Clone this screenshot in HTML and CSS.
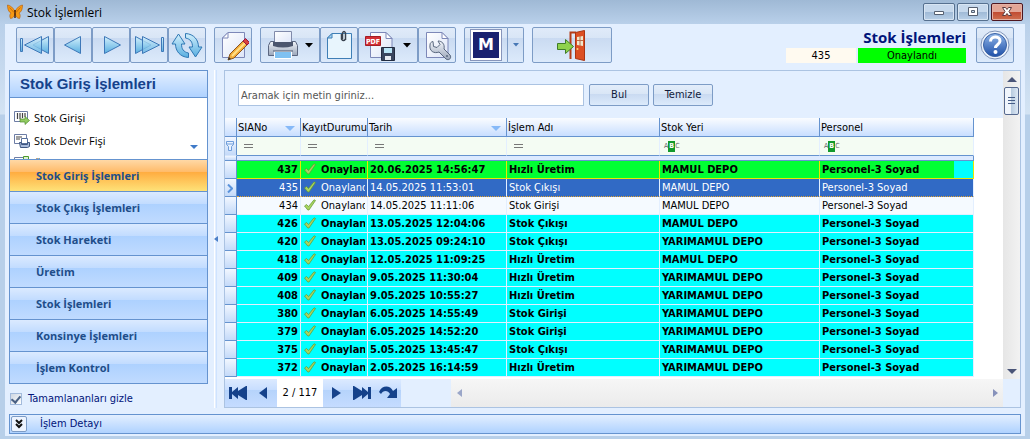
FILE: index.html
```html
<!DOCTYPE html>
<html lang="tr">
<head>
	<meta charset="utf-8">
	<title>Stok İşlemleri</title>
	<link rel="stylesheet" href="styles.css">
</head>
<body>
	<!-- shared icons -->
	<svg class="defs" width="0" height="0" aria-hidden="true">
		<defs>
			<linearGradient id="blue" x1="0" y1="0" x2="0" y2="1">
				<stop offset="0" stop-color="#d3f0fc"/>
				<stop offset="1" stop-color="#58aee0"/>
			</linearGradient>
			<linearGradient id="paper" x1="0" y1="0" x2="1" y2="1">
				<stop offset="0" stop-color="#ffffff"/>
				<stop offset="1" stop-color="#dde5f8"/>
			</linearGradient>
			<linearGradient id="metal" x1="0" y1="0" x2="0" y2="1">
				<stop offset="0" stop-color="#f2f5fa"/>
				<stop offset="1" stop-color="#9aa6ba"/>
			</linearGradient>
			<linearGradient id="orb" x1="0" y1="0" x2="0" y2="1">
				<stop offset="0" stop-color="#91b6e8"/>
				<stop offset="1" stop-color="#1d4fa8"/>
			</linearGradient>
			<symbol id="tick" viewBox="0 0 12 12">
				<path d="M.5 7l2-1.500 2 2L10 .8l1.500 .7L5 11H3.800z" fill="#a9d460" stroke="#5f9630" stroke-width=".7"/>
			</symbol>
			<symbol id="sheet" viewBox="0 0 32 32">
				<path d="M11 3.500h16.500v25h-22V9z" fill="url(#paper)" stroke="#7d88b8"/>
				<path d="M11 3.500V9H5.500z" fill="#fff" stroke="#7d88b8"/>
			</symbol>
			<symbol id="sheet-right" viewBox="0 0 32 32">
				<path d="M5.500 3.500H21l6 6v19H5.500z" fill="url(#paper)" stroke="#7d88b8"/>
				<path d="M21 3.500v6h6z" fill="#fff" stroke="#7d88b8"/>
			</symbol>
		</defs>
	</svg>

	<div class="window">
		<header class="titlebar">
			<svg class="app-icon" viewBox="0 0 16 16">
				<path d="M8 7.500C6 3.500 3.500 1.500 .5 1c0 3.500 .8 7 3.500 8-1.500 1.500-1.500 3.500-.5 5.500C6 14.500 7.500 12 8 9.500c.5 2.500 2 5 4.500 5 1-2 1-4-.5-5.500 2.700-1 3.500-4.500 3.500-8-3 .5-5.500 2.500-7.500 6.500z" fill="#f79a14" stroke="#b35a08" stroke-width=".6"/>
				<path d="M8 6v8" stroke="#3c1a04" stroke-width="1.400"/>
				<path d="M2.500 3.500L7 8.500M13.500 3.500L9 8.500" stroke="#b35a08" stroke-width=".7"/>
			</svg>
			<h1>Stok İşlemleri</h1>
			<div class="window-buttons">
				<button aria-label="Küçült"><svg viewBox="0 0 16 12"><path d="M3.500 5.500h9v3h-9z" fill="#fff" stroke="#555f70"/></svg></button>
				<button aria-label="Ekranı kapla"><svg viewBox="0 0 16 12"><path d="M3.500 1.500h9v8h-9zM6.500 4.500h3v2h-3z" fill="#fff" stroke="#555f70" fill-rule="evenodd"/></svg></button>
				<button class="close" aria-label="Kapat"><svg viewBox="0 0 16 12"><path d="M3.500 1.500h3L8 3.500l1.500-2h3L10 5.500l2.500 4h-3L8 7.500l-1.500 2h-3l2.500-4z" fill="#fff" stroke="#5d3a3d"/></svg></button>
			</div>
		</header>

		<main class="client">
			<div class="toolbar">
				<div class="group">
					<button class="tool" aria-label="İlk kayıt"><svg viewBox="0 0 32 32"><path d="M1.500 9.500h2v13h-2z" fill="url(#blue)" stroke="#3e78b8"/><path d="M29.500 7.500v17L14 16z" fill="url(#blue)" stroke="#3e78b8"/><path d="M22.500 7.500v17L5.500 16z" fill="url(#blue)" stroke="#3e78b8" fill-opacity=".8"/></svg></button>
					<button class="tool" aria-label="Önceki kayıt"><svg viewBox="0 0 32 32"><path d="M23.500 7.500v17L7.500 16z" fill="url(#blue)" stroke="#3e78b8"/></svg></button>
					<button class="tool" aria-label="Sonraki kayıt"><svg viewBox="0 0 32 32"><path d="M9.500 7.500v17l16-8.500z" fill="url(#blue)" stroke="#3e78b8"/></svg></button>
					<button class="tool" aria-label="Son kayıt"><svg viewBox="0 0 32 32"><path d="M28.500 8.500h2v14h-2z" fill="url(#blue)" stroke="#3e78b8"/><path d="M2.500 7.500v17L18 16z" fill="url(#blue)" stroke="#3e78b8"/><path d="M9.500 7.500v17l17-8.500z" fill="url(#blue)" stroke="#3e78b8" fill-opacity=".8"/></svg></button>
					<button class="tool" aria-label="Yenile"><svg viewBox="0 0 32 32"><path d="M1 15L7.500 5 14 15h-3.500c0 5 2 8 7 9v4.500C9 28 4.500 22 4.500 15z" fill="url(#blue)" stroke="#2f78b4"/><path d="M31 18l-6.500 10L18 18h3.500c0-5-2-8-7-9V4.500C23 5 27.500 11 27.500 18z" fill="url(#blue)" stroke="#2f78b4"/></svg></button>
				</div>
				<div class="group">
					<button class="tool" aria-label="Düzenle"><svg viewBox="0 0 32 32"><use href="#sheet"/><path d="M11 31l2-6L26 12l4 4-13 13z" fill="#f4ad3a" stroke="#8a5420"/><path d="M15 27l13-13" stroke="#ffe08a" stroke-width="2"/><path d="M26 12l2.500-2.500 4 4L30 16z" fill="#d8423c" stroke="#914"/><path d="M11 31l1-3 2 2z" fill="#333"/></svg></button>
				</div>
				<div class="group">
					<button class="tool drop" aria-label="Yazdır">
						<svg viewBox="0 0 32 32"><path d="M7.500 2.500h17v12h-17z" fill="url(#paper)" stroke="#808aaa"/><path d="M3.500 12.500h4v3h17v-3h4l2 4v10h-29v-10z" fill="url(#metal)" stroke="#5b6680"/><path d="M6 13h20v4q-10 3-20 0z" fill="#4c566e"/><path d="M7.500 22.500h17v7h-17z" fill="#7fc1f2" stroke="#fff"/><path d="M6 22h20" stroke="#4c566e"/></svg>
						<svg class="caret" viewBox="0 0 8 5"><path d="M0 0h8L4 4.500z"/></svg>
					</button>
					<button class="tool" aria-label="Dosya ekle"><svg viewBox="0 0 32 32"><path d="M9 4.500h19.500v25h-24V9z" fill="#e8f5fd" stroke="#3f7fb6"/><path d="M9 4.500V9H4.500z" fill="#a5d3f1" stroke="#3f7fb6"/><path d="M18.500 5v5q2 3 4 0V4q-1.500-3-3 0v6M22.500 4v7" fill="none" stroke="#39434f" stroke-width="1.500"/></svg></button>
					<button class="tool drop" aria-label="PDF olarak kaydet">
						<svg viewBox="0 0 32 32"><use href="#sheet-right"/><path d="M.5 7.500h15v9H.5z" fill="#d32f35" stroke="#a51c22"/><text x="1" y="15" class="pdf">PDF</text><path d="M16.500 18.500h13v13h-13z" fill="#39455e" stroke="#222c40"/><path d="M19 19h8v5h-8z" fill="#b9e4f6"/><path d="M20 27h6v4h-6z" fill="#e7ebf2"/></svg>
						<svg class="caret" viewBox="0 0 8 5"><path d="M0 0h8L4 4.500z"/></svg>
					</button>
					<button class="tool" aria-label="Ayarlar"><svg viewBox="0 0 32 32"><use href="#sheet-right"/><path d="M12 12.500l.5 5 3.500 1 3-3-2-3.500c4 0 7 3 6 8l6 6c2 3-1 6-4 4l-7-7c-5 2-10-1-9-7 0-2 1-3 3-3.500z" fill="url(#metal)" stroke="#59677e"/><circle cx="26" cy="27" r="1" fill="#59677e"/></svg></button>
				</div>
				<div class="group">
					<button class="tool m-button"><span class="m-logo">M</span></button>
					<button class="tool m-drop" aria-label="Diğer"><svg viewBox="0 0 6 4"><path d="M0 0h6L3 3.500z" fill="#4778b5"/></svg></button>
				</div>
				<div class="group">
					<button class="tool exit" aria-label="Çıkış"><svg viewBox="0 0 32 32"><path d="M14.500 30V3.500H20" fill="none" stroke="#b43d18" stroke-width="2"/><path d="M19.500 3.500l9-2v30l-9-2z" fill="#dc4f23" stroke="#a93512"/><path d="M21 8l6-1v10l-6-1z" fill="#f0e7cc"/><path d="M21 11.500h6M24 7v10" stroke="#b96a48"/><circle cx="21.500" cy="20" r="1" fill="#f6d77a"/><path d="M1.500 14.500h8v-4l8 7-8 7v-4h-8z" fill="#8ed24c" stroke="#3f7d27"/></svg></button>
				</div>
				<div class="record">
					<strong>Stok İşlemleri</strong>
					<div class="record-state">
						<output class="record-no">435</output>
						<output class="record-status">Onaylandı</output>
					</div>
				</div>
				<button class="tool" aria-label="Yardım"><svg viewBox="0 0 32 32"><circle cx="16" cy="16" r="14" fill="#eef4fc" stroke="#7e93b8"/><circle cx="16" cy="16" r="11.500" fill="url(#orb)" stroke="#3a62a5"/><path d="M11.500 12.500c0-6 9.500-6 9.500-.5 0 3.500-4.500 3.500-4.500 7" fill="none" stroke="#fff" stroke-width="3"/><circle cx="16.500" cy="23" r="2" fill="#fff"/></svg></button>
			</div>

			<div class="work">
				<aside class="side">
					<nav class="nav">
						<h2>Stok Giriş İşlemleri</h2>
						<div class="nav-items">
							<a href="#giris"><svg viewBox="0 0 16 16"><path d="M.5 1.500h13v10H.5z" fill="#fff" stroke="#6d7da5"/><path d="M3.500 3v6M6 3v6M8.500 3v5M11 3v4" stroke="#444" stroke-width="1.200"/><path d="M6 9h5V6.500l4.500 4-4.500 4V12H6z" fill="#92cb62" stroke="#4c8b2d" stroke-width=".7"/></svg>Stok Girişi</a>
							<a href="#devir"><svg viewBox="0 0 16 16"><path d="M.5 1.500h12v9H.5z" fill="#fff" stroke="#6d7da5"/><path d="M3 3v4M5 3v4M7 3v2" stroke="#444"/><path d="M7.500 5.500h6v5h-6z" fill="#fff" stroke="#58709c"/><path d="M5.500 9.500h2v2h6v-2h2v4l-2 1h-7z" fill="#a8bbdc" stroke="#3d5580"/></svg>Stok Devir Fişi</a>
							<a href="#uretim"><svg viewBox="0 0 16 16"><path d="M.5 1.500h13v10H.5z" fill="#fff" stroke="#6d7da5"/><path d="M9.500 .5h5v6h-5z" fill="#dff1d0" stroke="#4c9b2d"/></svg>Üretim</a>
							<svg class="more" viewBox="0 0 8 5"><path d="M0 0h8L4 4z" fill="#3f7ac8"/></svg>
						</div>
						<button class="nav-group active">Stok Giriş İşlemleri</button>
						<button class="nav-group">Stok Çıkış İşlemleri</button>
						<button class="nav-group">Stok Hareketi</button>
						<button class="nav-group">Üretim</button>
						<button class="nav-group">Stok İşlemleri</button>
						<button class="nav-group">Konsinye İşlemleri</button>
						<button class="nav-group">İşlem Kontrol</button>
					</nav>
					<label class="hide-done"><input type="checkbox" checked>Tamamlananları gizle</label>
				</aside>

				<div class="splitter"><svg viewBox="0 0 4 6"><path d="M4 0v6L0 3z" fill="#4b7fc7"/></svg></div>

				<section class="panel">
					<div class="panel-main">
						<form class="search">
							<input type="text" aria-label="Ara" placeholder="Aramak için metin giriniz...">
							<button type="button">Bul</button>
							<button type="button">Temizle</button>
						</form>
						<div class="grid">
							<table>
								<colgroup>
									<col class="c-mark"><col class="c-no"><col class="c-state"><col class="c-date"><col class="c-name"><col class="c-place"><col class="c-person">
								</colgroup>
								<thead>
									<tr>
										<th></th>
										<th class="sorted">SIANo<svg viewBox="0 0 10 5"><path d="M0 0h10L5 5z" fill="#86b9f8"/></svg></th>
										<th>KayıtDurumu</th>
										<th class="sorted">Tarih<svg viewBox="0 0 10 5"><path d="M0 0h10L5 5z" fill="#86b9f8"/></svg></th>
										<th>İşlem Adı</th>
										<th>Stok Yeri</th>
										<th>Personel</th>
									</tr>
									<tr class="filter">
										<td class="mark"><svg viewBox="0 0 8 10"><path d="M.5 .5h7v3l-2 2v4h-3v-4l-2-2zM.5 3h7" fill="#e8f2ff" stroke="#6f9edb"/></svg></td>
										<td><i class="eq"></i></td>
										<td><i class="eq"></i></td>
										<td><i class="eq"></i></td>
										<td><i class="eq"></i></td>
										<td><span class="abc">A<b>B</b>C</span></td>
										<td><span class="abc">A<b>B</b>C</span></td>
									</tr>
									<tr class="band"><td class="mark"></td><td colspan="6"></td></tr>
								</thead>
								<tbody>
									<tr class="first"><td class="mark"></td><td class="no">437</td><td><div class="state"><svg class="tick"><use href="#tick"/></svg>Onaylandı</div></td><td>20.06.2025 14:56:47</td><td>Hızlı Üretim</td><td>MAMUL DEPO</td><td>Personel-3 Soyad</td></tr>
									<tr class="selected"><td class="mark"><svg viewBox="0 0 6 8"><path d="M1 0l4 4-4 4" fill="none" stroke="#5a93dc" stroke-width="2"/></svg></td><td class="no">435</td><td><div class="state"><svg class="tick"><use href="#tick"/></svg>Onaylandı</div></td><td>14.05.2025 11:53:01</td><td>Stok Çıkışı</td><td>MAMUL DEPO</td><td>Personel-3 Soyad</td></tr>
									<tr class="plain"><td class="mark"></td><td class="no">434</td><td><div class="state"><svg class="tick"><use href="#tick"/></svg>Onaylandı</div></td><td>14.05.2025 11:11:06</td><td>Stok Girişi</td><td>MAMUL DEPO</td><td>Personel-3 Soyad</td></tr>
									<tr><td class="mark"></td><td class="no">426</td><td><div class="state"><svg class="tick"><use href="#tick"/></svg>Onaylandı</div></td><td>13.05.2025 12:04:06</td><td>Stok Çıkışı</td><td>MAMUL DEPO</td><td>Personel-3 Soyad</td></tr>
									<tr><td class="mark"></td><td class="no">420</td><td><div class="state"><svg class="tick"><use href="#tick"/></svg>Onaylandı</div></td><td>13.05.2025 09:24:10</td><td>Stok Çıkışı</td><td>YARIMAMUL DEPO</td><td>Personel-3 Soyad</td></tr>
									<tr><td class="mark"></td><td class="no">418</td><td><div class="state"><svg class="tick"><use href="#tick"/></svg>Onaylandı</div></td><td>12.05.2025 11:09:25</td><td>Hızlı Üretim</td><td>MAMUL DEPO</td><td>Personel-3 Soyad</td></tr>
									<tr><td class="mark"></td><td class="no">409</td><td><div class="state"><svg class="tick"><use href="#tick"/></svg>Onaylandı</div></td><td>9.05.2025 11:30:04</td><td>Hızlı Üretim</td><td>YARIMAMUL DEPO</td><td>Personel-3 Soyad</td></tr>
									<tr><td class="mark"></td><td class="no">408</td><td><div class="state"><svg class="tick"><use href="#tick"/></svg>Onaylandı</div></td><td>9.05.2025 10:55:27</td><td>Hızlı Üretim</td><td>YARIMAMUL DEPO</td><td>Personel-3 Soyad</td></tr>
									<tr><td class="mark"></td><td class="no">380</td><td><div class="state"><svg class="tick"><use href="#tick"/></svg>Onaylandı</div></td><td>6.05.2025 14:55:49</td><td>Stok Girişi</td><td>YARIMAMUL DEPO</td><td>Personel-3 Soyad</td></tr>
									<tr><td class="mark"></td><td class="no">379</td><td><div class="state"><svg class="tick"><use href="#tick"/></svg>Onaylandı</div></td><td>6.05.2025 14:52:20</td><td>Stok Girişi</td><td>YARIMAMUL DEPO</td><td>Personel-3 Soyad</td></tr>
									<tr><td class="mark"></td><td class="no">375</td><td><div class="state"><svg class="tick"><use href="#tick"/></svg>Onaylandı</div></td><td>5.05.2025 13:45:47</td><td>Stok Çıkışı</td><td>YARIMAMUL DEPO</td><td>Personel-3 Soyad</td></tr>
									<tr><td class="mark"></td><td class="no">372</td><td><div class="state"><svg class="tick"><use href="#tick"/></svg>Onaylandı</div></td><td>2.05.2025 16:14:59</td><td>Hızlı Üretim</td><td>YARIMAMUL DEPO</td><td>Personel-3 Soyad</td></tr>
								</tbody>
							</table>
						</div>
						<div class="pager">
							<div class="pager-nav">
								<button aria-label="İlk"><svg viewBox="0 0 20 16"><path d="M1 2h3v5l6-5v4l8-5h1v14h-1l-8-5v4l-6-5v5H1z"/></svg></button>
								<button aria-label="Önceki"><svg viewBox="0 0 20 16"><path d="M13 2v12L5 8z"/></svg></button>
								<span>2 / 117</span>
								<button aria-label="Sonraki"><svg viewBox="0 0 20 16"><path d="M6 2v12l9-6z"/></svg></button>
								<button aria-label="Son"><svg viewBox="0 0 20 16"><path d="M19 2h-3v5l-6-5v4L2 1H1v14h1l8-5v4l6-5v5h3z"/></svg></button>
								<button aria-label="Git"><svg viewBox="0 0 20 16"><path d="M1 7C4 0 12 0 15 6l4-3v10H9l3-4C10 5 5 5 3 9z"/></svg></button>
							</div>
							<div class="hscroll">
								<button aria-label="Sola kaydır"><svg viewBox="0 0 5 8"><path d="M5 0v8L0 4z" fill="#9aa6c8"/></svg></button>
								<button aria-label="Sağa kaydır"><svg viewBox="0 0 5 8"><path d="M0 0v8l5-4z" fill="#8792bb"/></svg></button>
							</div>
						</div>
					</div>
					<div class="vscroll">
						<button aria-label="Yukarı kaydır"><svg viewBox="0 0 10 5"><path d="M0 5h10L5 0z" fill="#4a5578"/></svg></button>
						<div class="thumb"></div>
						<button class="down" aria-label="Aşağı kaydır"><svg viewBox="0 0 10 5"><path d="M0 0h10L5 5z" fill="#4a5578"/></svg></button>
					</div>
				</section>
			</div>

			<div class="detail">
				<button aria-label="Detayı aç"><svg viewBox="0 0 8 10"><path d="M1 1l3 3 3-3M1 5l3 3 3-3" fill="none" stroke="#111" stroke-width="2"/></svg></button>
				<span>İşlem Detayı</span>
			</div>
		</main>
	</div>
</body>
</html>
```

FILE: styles.css
```css
* {
    box-sizing: border-box;
}

body {
    margin: 0;
    font-family: "DejaVu Sans Condensed", "DejaVu Sans", sans-serif;
    font-size: 11px;
    line-height: 14px;
    color: #000;
}

button, input {
    font: inherit;
    color: inherit;
}

button {
    margin: 0;
    padding: 0;
    border: 0;
    background: none;
}

svg {
    display: block;
    flex: none;
}

.defs {
    position: absolute;
}

.window {
    display: flex;
    flex-direction: column;
    min-height: 100vh;
    padding: 0 5px 3px;
    background: linear-gradient(#9fb9d5, #b9d0ea 24px, #d3e3f3 114px, #b7cfe9 115px);
}

/* title bar */
.titlebar {
    display: flex;
    align-items: center;
    height: 24px;
    padding: 0 2px;
}

.app-icon {
    width: 16px;
    height: 16px;
}

.titlebar h1 {
    margin: 2px 0 0 4px;
    font: 12px/16px "Open Sans", "Noto Sans", sans-serif;
}

.window-buttons {
    display: flex;
    gap: 2px;
    align-self: flex-start;
    margin: 3px 0 0 auto;
}

.window-buttons button {
    display: grid;
    place-items: center;
    width: 32px;
    height: 18px;
    border: 1px solid #56708f;
    border-radius: 2px;
    background: linear-gradient(#c6d8ec 50%, #9fb9d6 50%, #b9d0e8);
    box-shadow: inset 0 0 0 1px #d8e5f3;
}

.window-buttons .close {
    border-color: #4d1620;
    background: linear-gradient(#e2a596 50%, #c04a31 50%, #cf7050);
    box-shadow: inset 0 0 0 1px #e3b0a4;
}

.window-buttons svg {
    width: 16px;
    height: 12px;
}

.client {
    display: flex;
    flex: 1;
    flex-direction: column;
    padding: 3px 4px 2px;
    background: #e3efff;
}

/* toolbar */
.toolbar {
    display: flex;
    gap: 8px;
    padding: 0 7px;
}

.group {
    display: flex;
}

.tool {
    display: flex;
    align-items: center;
    justify-content: center;
    width: 38px;
    height: 36px;
    border: 1px solid #7d9cc6;
    border-radius: 2px;
    background: linear-gradient(#e0ebf9, #d9e6f6 28%, #c9daf1 28%, #dceafb);
}

.tool svg {
    width: 32px;
    height: 32px;
}

.tool.drop {
    gap: 6px;
    width: 60px;
}

.tool .caret {
    width: 8px;
    height: 5px;
}

.pdf {
    font: bold 7px "DejaVu Sans Condensed", sans-serif;
    fill: #fff;
}

.m-button {
    width: 44px;
    border-radius: 2px 0 0 2px;
}

.m-logo {
    width: 30px;
    height: 30px;
    border: 2px solid #fff;
    outline: 1px solid #8795bb;
    background: #1a2270;
    color: #fff;
    font: 900 16px/26px "DejaVu Sans", sans-serif;
}

.tool.m-drop {
    width: 16px;
    border-left: 0;
    border-radius: 0 2px 2px 0;
}

.m-drop svg {
    width: 6px;
    height: 4px;
}

.tool.exit {
    width: 80px;
}

.record {
    width: 180px;
    margin-left: auto;
    text-align: right;
}

.record strong {
    display: block;
    color: #00147a;
    font: bold 15px/21px "Open Sans", "Noto Sans", sans-serif;
}

.record-state {
    display: flex;
    gap: 2px;
    text-align: center;
    line-height: 15px;
}

.record-no {
    width: 70px;
    background: #fffaf0;
}

.record-status {
    flex: 1;
    background: #00ff00;
}

.record + .tool {
    margin-left: 2px;
}

/* work area */
.work {
    display: flex;
    flex: 1;
    margin-top: 7px;
}

.side {
    width: 199px;
}

.nav {
    border: 1px solid #6593cf;
    background: #fff;
}

.nav h2 {
    margin: 0;
    padding: 0 10px;
    border-bottom: 1px solid #6593cf;
    background: linear-gradient(#e3efff, #afd2ff);
    color: #15428b;
    font: bold 15px/26px "Liberation Sans", sans-serif;
}

.nav-items {
    position: relative;
    height: 61px;
    padding: 8px 4px 0;
    overflow: hidden;
}

.nav-items a {
    display: flex;
    align-items: center;
    gap: 4px;
    height: 23px;
    color: #000;
    font: 11px/23px "Open Sans", "Noto Sans", sans-serif;
    text-decoration: none;
}

.nav-items a svg {
    width: 16px;
    height: 16px;
}

.more {
    position: absolute;
    right: 9px;
    bottom: 9px;
    width: 8px;
    height: 5px;
}

.nav-group {
    display: block;
    width: 100%;
    height: 32px;
    padding-left: 26px;
    border-top: 1px solid #6593cf;
    background: linear-gradient(#dbeaff, #c2dcff 38%, #add1ff 38%, #c0dbff);
    color: #204d89;
    font: bold 11px/30px "Open Sans", "Noto Sans", sans-serif;
    text-align: left;
}

.nav-group.active {
    background: linear-gradient(#ffd9a6, #ffbb6a 38%, #ffab3f 38%, #fee278);
}

.hide-done {
    display: flex;
    align-items: center;
    gap: 6px;
    height: 23px;
    padding: 6px 0 0 1px;
    color: #00147a;
}

.hide-done input {
    appearance: none;
    width: 12px;
    height: 12px;
    margin: 0;
    border: 1px solid #a3bbdc;
    background: linear-gradient(135deg, #cfd7e2, #fff);
}

.hide-done input:checked::before {
    content: "";
    display: block;
    width: 4px;
    height: 7px;
    margin: 0 auto;
    border: solid #4a6184;
    border-width: 0 2px 2px 0;
    transform: rotate(40deg);
}

.splitter {
    display: flex;
    align-items: center;
    justify-content: center;
    width: 16px;
    background: linear-gradient(90deg, #e3efff 6px, #fff 6px, #fff 7px, #e3efff 7px, #e3efff 8px, #cfe3ff 8px, #cfe3ff 9px, #e3efff 9px);
}

.splitter svg {
    width: 4px;
    height: 6px;
}

.panel {
    display: flex;
    flex: 1;
    min-width: 0;
    border: 1px solid #abc3e2;
}

.panel-main {
    display: flex;
    flex: 1;
    flex-direction: column;
    min-width: 0;
}

/* search row */
.search {
    display: flex;
    gap: 4px;
    padding: 13px 13px 12px;
}

.search input {
    flex: 0 1 346px;
    min-width: 0;
    margin-right: 1px;
    height: 22px;
    padding: 0 2px;
    border: 1px solid #abc3e2;
    border-radius: 0;
    background: #fff;
}

.search input::placeholder {
    color: #555;
}

.search button {
    width: 60px;
    height: 22px;
    border: 1px solid #7d9cc6;
    border-radius: 2px;
    background: linear-gradient(#e3edfa, #d9e6f6 45%, #c9daf1 45%, #dceafb);
    color: #111c3c;
}

/* record grid */
.grid {
    flex: 1;
    overflow: hidden;
    background: #fff;
}

table {
    width: 749px;
    table-layout: fixed;
    border-collapse: separate;
    border-spacing: 0;
}

.c-mark { width: 12px; }
.c-no { width: 64px; }
.c-state { width: 67px; }
.c-date { width: 139px; }
.c-name { width: 153px; }
.c-place { width: 160px; }
.c-person { width: 154px; }

th, td {
    height: 18px;
    padding: 0 2px;
    border-right: 1px solid #e3efff;
    white-space: nowrap;
    text-align: left;
    vertical-align: middle;
}

th {
    height: 19px;
    padding: 2px 0 0 1px;
    border-right: 1px solid #6593cf;
    border-bottom: 1px solid #6593cf;
    background: linear-gradient(#fafcff, #c8deff);
    font-weight: normal;
}

.sorted svg {
    float: right;
    width: 10px;
    height: 5px;
    margin: 5px 5px 0 0;
}

.filter td {
    height: 19px;
    border-bottom: 1px solid #6593cf;
    background: #f4fcf3;
}

.eq {
    display: block;
    width: 9px;
    height: 4px;
    margin-left: 5px;
    border: solid #777;
    border-width: 1px 0;
}

.abc {
    display: flex;
    align-items: center;
    margin-left: 2px;
    color: #666;
    font: 7px/11px "DejaVu Sans Condensed", sans-serif;
}

.abc b {
    padding: 0 1px;
    background: #129a2c;
    color: #fff;
}

.band td {
    height: 5px;
    padding: 0;
    border-right: 1px solid #6593cf;
    border-bottom: 1px solid #6593cf;
    background: #dceaff;
}

tbody td {
    padding-top: 1px;
    border-bottom: 1px solid #e3efff;
    background: #00ffff;
    font-weight: bold;
    line-height: 16px;
}

tbody .no {
    text-align: right;
}

.state {
    display: flex;
    gap: 5px;
    height: 16px;
    padding-left: 1px;
    overflow: hidden;
}

.tick {
    width: 12px;
    height: 12px;
    margin-top: 1px;
}

.first td {
    border-color: #e8e800;
    background: #00ff33;
}

.first td:last-child {
    background: linear-gradient(90deg, #00ff33 134px, #00ffff 134px);
}

.selected td {
    border-bottom: 1px dotted #e0a030;
    background: #316ac5;
    color: #fff;
    font-weight: normal;
}

.plain td {
    background: #f5faff;
    font-weight: normal;
}

tr td.mark {
    border-right: 1px solid #6593cf;
    border-bottom: 1px solid #6593cf;
    background: linear-gradient(#f2f7ff, #c4daf9);
}

tr.filter td.mark {
    border-bottom-color: #d6e6fb;
    padding: 0 1px;
}

.mark svg {
    width: 6px;
    height: 9px;
}

.filter .mark svg {
    width: 8px;
    height: 10px;
}

/* pager and scroll bars */
.pager {
    display: flex;
    height: 28px;
}

.pager-nav {
    display: flex;
    align-items: center;
    width: 176px;
    margin-right: 50px;
    background: linear-gradient(#dceaff, #c8deff 38%, #b5d3fb 38%, #c5dcff);
}

.pager-nav button {
    display: grid;
    place-items: center;
    width: 26px;
    height: 28px;
}

.pager-nav svg {
    width: 20px;
    height: 16px;
    fill: #15428b;
}

.pager-nav span {
    width: 46px;
    background: #fff;
    line-height: 28px;
    text-align: center;
}

.hscroll {
    display: flex;
    flex: 1;
    justify-content: space-between;
    background: linear-gradient(#f6f6f6, #ebebeb);
}

.hscroll button {
    display: grid;
    place-items: center;
    width: 16px;
}

.hscroll svg {
    width: 5px;
    height: 8px;
}

.vscroll {
    display: flex;
    flex-direction: column;
    align-items: center;
    width: 17px;
    margin-bottom: 28px;
    background: linear-gradient(90deg, #e6e6e6, #f2f2f2);
}

.vscroll button {
    display: grid;
    place-items: center;
    width: 16px;
    height: 16px;
}

.vscroll svg {
    width: 10px;
    height: 5px;
}

.vscroll .down {
    margin-top: auto;
}

.thumb {
    width: 15px;
    height: 28px;
    padding: 9px 3px;
    border: 1px solid #56698f;
    border-radius: 2px;
    background: repeating-linear-gradient(#465d88 0 1px, transparent 1px 3px) content-box, linear-gradient(90deg, #f0f5fc 45%, #b9cce0 50%, #dde8f5);
}

/* collapsed detail bar */
.detail {
    display: flex;
    align-items: center;
    gap: 13px;
    height: 20px;
    margin-top: 6px;
    padding-left: 1px;
    border: 1px solid #6593cf;
    background: linear-gradient(#e3efff, #afd2ff);
    color: #00147a;
}

.detail button {
    display: grid;
    place-items: center;
    width: 16px;
    height: 16px;
    border: 1px solid #7d9cc6;
    border-radius: 2px;
    background: #edf4ff;
}

.detail svg {
    width: 8px;
    height: 10px;
}
```
